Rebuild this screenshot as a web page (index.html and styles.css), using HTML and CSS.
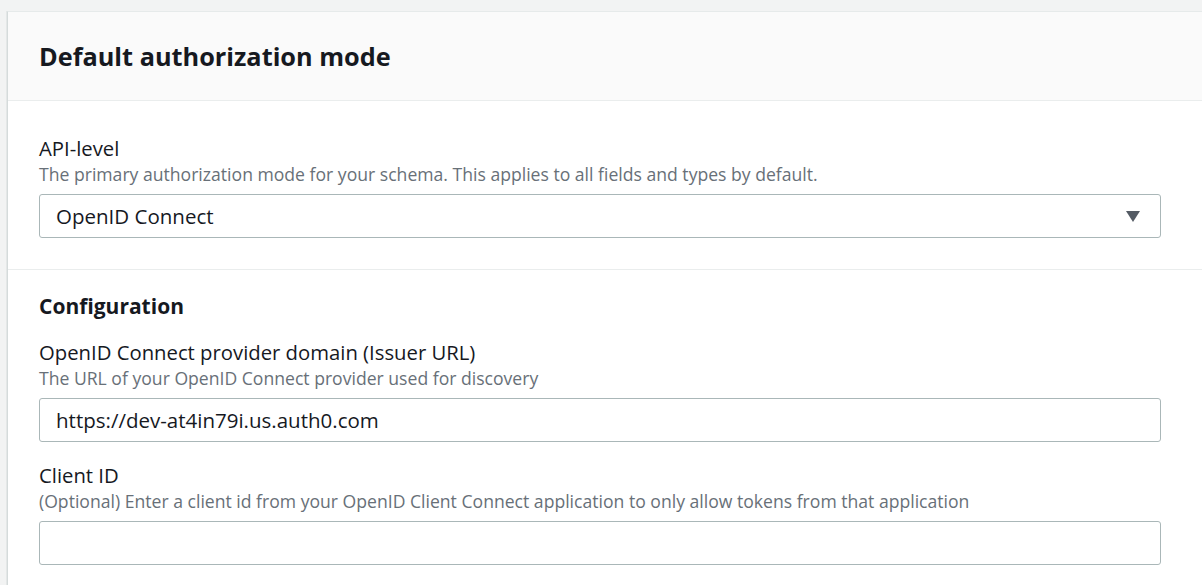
FILE: index.html
```html
<!DOCTYPE html>
<html>
<head>
<meta charset="utf-8">
<link rel="stylesheet" href="styles.css">
</head>
<body>
<div class="page">
  <div class="card">
    <div class="card-header">
      <h2 class="card-title">Default authorization mode</h2>
    </div>
    <div class="section">
      <div class="field">
        <div class="label">API-level</div>
        <div class="desc">The primary authorization mode for your schema. This applies to all fields and types by default.</div>
        <div class="select">
          <span class="select-value">OpenID Connect</span>
          <svg class="caret" width="14" height="11" viewBox="0 0 14 11"><path d="M0 0 H14 L7 11 Z" fill="#545b64"/></svg>
        </div>
      </div>
    </div>
    <div class="section section-config">
      <h3 class="sub-title">Configuration</h3>
      <div class="field">
        <div class="label">OpenID Connect provider domain (Issuer URL)</div>
        <div class="desc">The URL of your OpenID Connect provider used for discovery</div>
        <div class="input">https://dev-at4in79i.us.auth0.com</div>
      </div>
      <div class="field field-gap">
        <div class="label">Client ID</div>
        <div class="desc">(Optional) Enter a client id from your OpenID Client Connect application to only allow tokens from that application</div>
        <div class="input"></div>
      </div>
    </div>
  </div>
</div>
</body>
</html>
```

FILE: styles.css
```css
html, body {
  margin: 0;
  padding: 0;
  background: #f2f3f3;
  font-family: "Open Sans", "Noto Sans", sans-serif;
  color: #16191f;
}
.page {
  padding: 11px 0 0 7px;
  height: 574px;
  overflow: hidden;
}
.card {
  background: #ffffff;
  border-top: 1px solid #e6eaea;
  border-left: 1px solid #d5dbdb;
  box-shadow: -1px 0 0 #e4e7e7;
  height: 100%;
}
.card-header {
  background: #fafafa;
  border-bottom: 1px solid #eaeded;
  height: 88px;
  padding: 0 41px 0 31px;
  display: flex;
  align-items: center;
}
.card-title {
  margin: 0;
  font-size: 25.3px;
  font-weight: 700;
  line-height: 32px;
  padding-top: 0;
}
.section {
  padding: 34px 41px 31px 31px;
  border-bottom: 1px solid #eaeded;
}
.section-config {
  border-bottom: none;
  padding-top: 22px;
}
.sub-title {
  margin: 0 0 19px 0;
  font-size: 21px;
  font-weight: 700;
  line-height: 28px;
}
.label {
  font-size: 20.3px;
  line-height: 27px;
}
.desc {
  font-size: 17.6px;
  line-height: 24px;
  color: #687078;
  margin-bottom: 8px;
}
.select, .input {
  box-sizing: border-box;
  height: 44px;
  border: 1px solid #aab7b8;
  border-radius: 3px;
  padding: 0 20px 0 16px;
  display: flex;
  align-items: center;
  font-size: 20.5px;
  background: #fff;
}
.select {
  justify-content: space-between;
}
.field-gap {
  margin-top: 20px;
}
```
